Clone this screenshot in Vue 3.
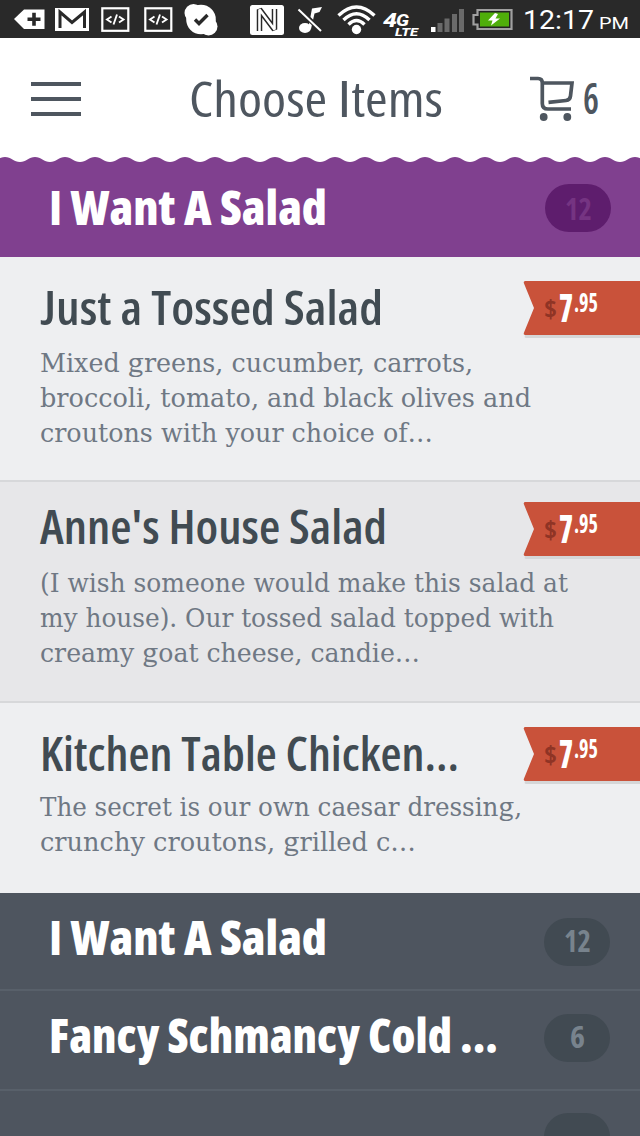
<script setup>
import { h, ref } from "vue";

const cartCount = ref(6);

const items = ref([
  {
    title: "Just a Tossed Salad",
    width: 343,
    lines: [
      { text: "Mixed greens, cucumber, carrots,", width: 433 },
      { text: "broccoli, tomato, and black olives and", width: 491 },
      { text: "croutons with your choice of…", width: 393 },
    ],
  },
  {
    title: "Anne's House Salad",
    width: 347,
    lines: [
      { text: "(I wish someone would make this salad at", width: 528 },
      { text: "my house). Our tossed salad topped with", width: 514 },
      { text: "creamy goat cheese, candie…", width: 380 },
    ],
  },
  {
    title: "Kitchen Table Chicken...",
    width: 419,
    lines: [
      { text: "The secret is our own caesar dressing,", width: 482 },
      { text: "crunchy croutons, grilled c…", width: 376 },
    ],
  },
]);

const categories = ref([
  { title: "I Want A Salad", width: 278, count: "12", countWidth: 27 },
  { title: "Fancy Schmancy Cold ...", width: 449, count: "6", countWidth: 15 },
]);

// one line of text condensed to a fixed width
// plain: capital I comes from Roboto, which has no bars on it
const FitText = (props) =>
  h("svg", { width: props.width, height: props.height }, [
    h(
      "text",
      {
        x: 0,
        y: props.baseline,
        textLength: props.width,
        lengthAdjust: "spacingAndGlyphs",
      },
      props.plain
        ? props.text
            .split(/(I)/)
            .filter((part) => part)
            .map((part) =>
              part === "I" ? h("tspan", { "font-family": "Roboto" }, part) : part
            )
        : props.text
    ),
  ]);
FitText.props = {
  text: null,
  width: Number,
  height: Number,
  baseline: Number,
  plain: Boolean,
};
</script>

<template>
  <div class="app">
    <div class="status">
      <svg class="status__icons" width="520" height="38" viewBox="0 0 520 38">
        <!-- tag -->
        <path d="M14 19L24 9.5H44.5V29H24z" fill="#fff" />
        <path d="M27.500 19.200H40.500M34 12.700V25.700" stroke="#292929" stroke-width="3.600" />
        <!-- mail -->
        <rect x="55" y="8" width="34" height="23" fill="#fff" />
        <path d="M60 28V12L72 22.500L84.500 12V28" fill="none" stroke="#292929" stroke-width="3" />
        <!-- code -->
        <g v-for="x in [0, 43]" :key="x" :transform="`translate(${x} 0)`" fill="none" stroke="#fff">
          <rect x="102.300" y="8.300" width="26" height="22.500" stroke-width="2.200" />
          <path d="M111.500 16.500L107 19.500L111.500 22.500M119 16.500L123.500 19.500L119 22.500M117 14.500L113.500 24.500" stroke-width="1.900" />
        </g>
        <!-- skype -->
        <circle cx="201" cy="19.500" r="14.800" fill="#fff" />
        <circle cx="193.500" cy="13" r="9" fill="#fff" />
        <circle cx="208.500" cy="26.500" r="9" fill="#fff" />
        <path d="M195 19.500L199 23.500L207.500 15" fill="none" stroke="#292929" stroke-width="3.400" />
        <!-- nfc -->
        <rect x="250" y="5" width="34" height="30" rx="2.500" fill="#fff" />
        <path d="M259.500 31V9.500L274.500 29.500V9" fill="none" stroke="#292929" stroke-width="5.500" stroke-linejoin="bevel" />
        <path d="M259.500 32V9.500L274.500 29.500V8" fill="none" stroke="#fff" stroke-width="2.600" stroke-linejoin="bevel" />
        <!-- muted note -->
        <ellipse cx="305" cy="28" rx="6" ry="5" fill="#fff" />
        <path d="M308.500 27L312 8.500L322 7L319.500 12L314.500 13.500L311 29z" fill="#fff" />
        <path d="M300 10.500L322 31.500" stroke="#292929" stroke-width="5" />
        <path d="M298.500 9.500L321 31" stroke="#fff" stroke-width="2" />
        <!-- wifi -->
        <circle cx="356.500" cy="29.500" r="4.700" fill="#fff" />
        <path
          d="M338.500 15.500Q356.500 -1.500 374.500 15.500M343.500 20Q356.500 7.500 369.500 20M348.500 24.500Q356.500 16.500 364.500 24.500"
          fill="none"
          stroke="#fff"
          stroke-width="3.400"
        />
        <text class="net" x="383" y="27" font-size="20" textLength="14" lengthAdjust="spacingAndGlyphs">4</text>
        <text class="net" x="396" y="25.500" font-size="16" textLength="13" lengthAdjust="spacingAndGlyphs">G</text>
        <text class="net" x="395" y="35.500" font-size="11" textLength="23" lengthAdjust="spacingAndGlyphs">LTE</text>
        <!-- signal -->
        <path d="M431 27H435.500V32H431z" fill="#fff" />
        <path d="M437.500 23H442.500V32H437.500zM444.500 18.500H449.500V32H444.500zM452 14H457V32H452zM459 9H464V32H459z" fill="#6a6a6a" />
        <!-- battery -->
        <path d="M477.500 10H511.500V29H477.500V24.500H473.500V15H477.500z" fill="#222" stroke="#a0a0a0" stroke-width="2.200" />
        <rect x="480" y="12.500" width="29" height="14" fill="#4fae0a" />
        <path d="M495 13L488 20.500H492.500L491 25.500L500 18.500H495.500L498 14z" fill="#fff" />
      </svg>
      <FitText class="clock" text="12:17" :width="71" :height="38" :baseline="29" />
      <FitText class="meridiem" text="PM" :width="30" :height="38" :baseline="29" />
    </div>

    <div class="header">
      <div class="hamburger">
        <hr />
        <hr />
        <hr />
      </div>
      <FitText class="header__title" text="Choose Items" :width="254" :height="60" :baseline="49" plain />
      <div class="cart">
        <svg width="46" height="46" viewBox="530 76 46 46">
          <g fill="none" stroke="#4e565f" stroke-width="3.700">
            <path d="M530 78.500H538Q542.300 78.500 542.300 83V103.500Q542.300 109 548 109H571" />
            <path d="M542 83H572L570.500 96Q570 100 566 100.500L548.500 102.300" />
          </g>
          <circle cx="543.700" cy="117" r="3.900" fill="#4e565f" />
          <circle cx="567.300" cy="117" r="3.900" fill="#4e565f" />
        </svg>
        <FitText class="cart__count" :text="cartCount" :width="16" :height="46" :baseline="38" />
      </div>
    </div>

    <div class="category category--open">
      <svg class="wave" width="640" height="6">
        <defs>
          <pattern id="scallop" x="5" width="30" height="6" patternUnits="userSpaceOnUse">
            <path d="M0 0C6 0 9 5 15 5S24 0 30 0z" fill="#fff" />
          </pattern>
        </defs>
        <rect width="640" height="6" fill="url(#scallop)" />
      </svg>
      <FitText class="category__title" text="I Want A Salad" :width="278" :height="48" :baseline="36" plain />
      <div class="count">
        <FitText text="12" :width="27" :height="48" :baseline="36" />
      </div>
    </div>

    <div v-for="item in items" :key="item.title" class="item">
      <div class="item__head">
        <FitText class="item__title" :text="item.title" :width="item.width" :height="48" :baseline="36" />
        <div class="price">
          <svg class="price__bg" width="117" height="57">
            <path d="M3 50H117V57H3Q1 57 2 54z" fill="#d5d6d7" />
            <path d="M2.500 0H117V54H2.500Q0 54 1 51.500L11 27L1 2.500Q0 0 2.500 0z" fill="#c9523a" />
          </svg>
          <FitText class="price__sign" text="$" :width="13" :height="54" :baseline="37" />
          <FitText class="price__main" text="7" :width="14" :height="54" :baseline="41" />
          <FitText class="price__cents" text=".95" :width="24" :height="54" :baseline="31" />
        </div>
      </div>
      <div class="item__text">
        <FitText
          v-for="line in item.lines"
          :key="line.text"
          :text="line.text"
          :width="line.width"
          :height="35"
          :baseline="25"
        />
      </div>
    </div>

    <div v-for="category in categories" :key="category.title" class="category">
      <FitText
        class="category__title"
        :text="category.title"
        :width="category.width"
        :height="48"
        :baseline="36"
        plain
      />
      <div class="count">
        <FitText :text="category.count" :width="category.countWidth" :height="48" :baseline="34" />
      </div>
    </div>
    <div class="category category--cut">
      <div class="count"></div>
    </div>
  </div>
</template>

<style>
body {
  margin: 0;
}
</style>

<style scoped>
.app {
  width: 640px;
  height: 1136px;
  overflow: hidden;
  background: #eeeff1;
  font-family: "Open Sans", "Noto Sans", sans-serif;
  font-stretch: 75%;
  /* capital J that stays on the baseline */
  font-feature-settings: "ss01", "ss02", "salt";
}
svg {
  display: block;
  flex: none;
  overflow: visible;
}

/*----------------------------
* status bar
*----------------------------*/
.status {
  display: flex;
  height: 38px;
  background: #292929;
  fill: #fff;
  font-family: Roboto, sans-serif;
  font-stretch: normal;
  font-feature-settings: normal;
}
.net {
  font-weight: 800;
  font-style: italic;
}
.clock {
  margin-left: 3px;
  font-size: 26px;
}
.meridiem {
  margin-left: 5px;
  font-size: 17px;
}

/*----------------------------
* header
*----------------------------*/
.header {
  display: flex;
  align-items: flex-start;
  height: 119px;
  padding: 0 40px 0 31px;
  box-sizing: border-box;
  background: #fff;
}
.hamburger {
  display: flex;
  flex-direction: column;
  gap: 11px;
  width: 50px;
  margin-top: 44px;
}
.hamburger hr {
  width: 50px;
  height: 4px;
  margin: 0;
  border: 0;
  background: #4e565f;
}
.header__title {
  margin: 30px 0 0 108px;
  font-size: 50px;
  font-weight: 400;
  fill: #4e565f;
}
.cart {
  display: flex;
  margin: 38px 0 0 87px;
}
.cart__count {
  margin-left: 7px;
  font-size: 43px;
  font-weight: 600;
  fill: #4e565f;
}

/*----------------------------
* categories
*----------------------------*/
.category {
  display: flex;
  justify-content: space-between;
  height: 98px;
  padding: 26px 30px 0 49px;
  border-bottom: 2px solid #58606a;
  box-sizing: border-box;
  background: #4e555f;
}
.category + .category {
  height: 100px;
  padding-top: 26px;
}
.category__title {
  font-size: 47.5px;
  font-weight: 800;
  fill: #fff;
}
.count {
  display: flex;
  justify-content: center;
  width: 66px;
  height: 48px;
  margin-top: -1px;
  border-radius: 24px;
  background: #414a52;
  fill: #78838d;
  font-size: 31px;
  font-weight: 700;
}
.category + .category .count {
  margin-top: -3px;
}
.category--open {
  position: relative;
  height: 100px;
  padding: 32px 29px 0 49px;
  border: 0;
  background: #80408f;
}
.category--open .count {
  margin-top: -5px;
  background: #5e1d6d;
  fill: #753482;
}
.wave {
  position: absolute;
  top: 0;
  left: 0;
}
.category.category--cut {
  justify-content: flex-end;
  padding-top: 25px;
  border: 0;
}

/*----------------------------
* menu items
*----------------------------*/
.item {
  height: 225px;
  padding: 32px 0 0 40px;
  border-bottom: 2px solid #d7d8da;
  box-sizing: border-box;
}
.item:nth-of-type(5) {
  height: 221px;
  padding-top: 26px;
  background: #e7e7e9;
}
.item:nth-of-type(6) {
  height: 190px;
  border: 0;
}
.item__head {
  display: flex;
  justify-content: space-between;
  align-items: flex-start;
  height: 48px;
}
.item__title {
  font-size: 47px;
  font-weight: 600;
  fill: #414b52;
}
.item__text {
  padding-top: 10px;
  font-family: "DejaVu Serif Condensed", "DejaVu Serif", serif;
  font-size: 26px;
  fill: #6f7884;
}
.item:nth-of-type(5) .item__text {
  padding-top: 11px;
}
.item:nth-of-type(6) .item__text {
  padding-top: 8px;
}

.price {
  position: relative;
  display: flex;
  width: 96px;
  margin-top: -8px;
  padding-left: 21px;
  font-weight: 700;
  fill: #fff;
}
.item:nth-of-type(5) .price {
  margin-top: -6px;
}
.price > * {
  position: relative;
}
.price .price__bg {
  position: absolute;
  top: 0;
  left: 0;
}
.price__sign {
  font-size: 25px;
  fill: #8f3425;
}
.price__main {
  margin-left: 2px;
  font-size: 39px;
  font-weight: 800;
}
.price__cents {
  margin-left: 1px;
  font-size: 27px;
}
</style>
